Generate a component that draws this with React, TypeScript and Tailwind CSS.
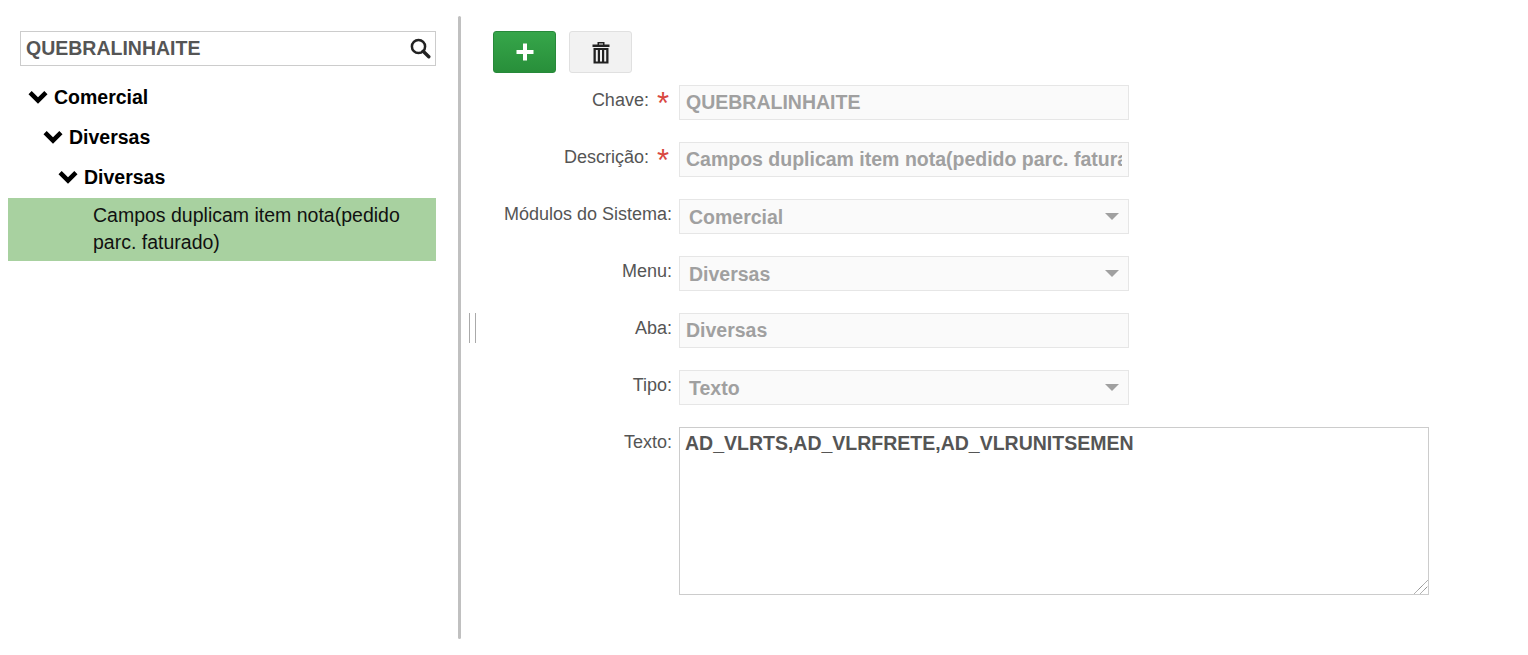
import React from 'react';

const font = { fontFamily: '"Liberation Sans", Arial, sans-serif' };

function Chevron() {
  return (
    <svg width="20" height="14" viewBox="0 0 20 14" className="shrink-0">
      <path d="M0.5 4.2 L3.7 1 L10 7.3 L16.3 1 L19.5 4.2 L10 13.7 Z" fill="#000" />
    </svg>
  );
}

function SearchIcon() {
  return (
    <svg width="21" height="21" viewBox="0 0 21 21">
      <circle cx="8.5" cy="8.5" r="6.6" fill="none" stroke="#222" strokeWidth="2.5" />
      <path d="M13.2 13.2 L18.8 18.8" stroke="#222" strokeWidth="3.4" strokeLinecap="round" />
    </svg>
  );
}

function PlusIcon() {
  return (
    <svg width="18" height="18" viewBox="0 0 18 18">
      <path d="M7 0.5 H11 V7 H17.5 V11 H11 V17.5 H7 V11 H0.5 V7 H7 Z" fill="#fff" />
    </svg>
  );
}

function TrashIcon() {
  return (
    <svg width="18" height="23" viewBox="0 0 18 23">
      <path d="M5.5 3.5 V1 H12.5 V3.5 H11 V2.4 H7 V3.5 Z M0.5 3.5 H17.5 V6 H0.5 Z" fill="#222" />
      <path d="M1.5 7 H16.5 V22.5 H1.5 Z M3.8 9 V20.5 H5.8 V9 Z M8 9 V20.5 H10 V9 Z M12.2 9 V20.5 H14.2 V9 Z" fill="#222" fillRule="evenodd" />
    </svg>
  );
}

function TreeRow({ label, indent }: { label: string; indent: string }) {
  return (
    <div className={`flex h-10 items-center gap-[6px] ${indent}`}>
      <Chevron />
      <span className="pt-[2px] text-[19.5px] font-bold leading-none text-black">{label}</span>
    </div>
  );
}

function Row({ label, required, children }: { label: string; required?: boolean; children: React.ReactNode }) {
  return (
    <div className="flex items-start">
      <div className="flex w-[196px] justify-end pt-[3px] text-[18px] leading-6 text-[#555]">
        <span>{label}</span>
        {required && <span className="ml-[8px] mr-[3px] text-[31px] leading-8 text-[#d9483f]">*</span>}
      </div>
      <div className="ml-[7px]">{children}</div>
    </div>
  );
}

function ReadOnlyInput({ value }: { value: string }) {
  return (
    <input
      readOnly
      value={value}
      className="block h-[35px] w-[450px] border border-[#e6e6e6] bg-[#fafafa] px-[6px] text-[19.5px] font-bold text-[#a0a0a0] outline-none"
      style={font}
    />
  );
}

function ReadOnlySelect({ value }: { value: string }) {
  return (
    <div className="flex h-[35px] w-[450px] items-center justify-between border border-[#e6e6e6] bg-[#fafafa] pl-[9px] pr-[9px] text-[19.5px] font-bold text-[#a0a0a0]">
      <span className="pt-[2px]">{value}</span>
      <span className="h-0 w-0 border-x-[7px] border-t-[7px] border-x-transparent border-t-[#a0a0a0]" />
    </div>
  );
}

export default function App() {
  return (
    <div className="flex h-[655px] w-[1528px] overflow-hidden bg-white" style={font}>
      {/* Tree */}
      <div className="w-[458px] pt-[31px] pl-2">
        <div className="ml-3 flex h-[35px] w-[416px] items-center justify-between border border-[#ccc] pl-[5px] pr-[4px]">
          <span className="text-[19.5px] font-bold text-[#555]">QUEBRALINHAITE</span>
          <SearchIcon />
        </div>
        <div className="mt-[11px]">
          <TreeRow label="Comercial" indent="pl-[20px]" />
          <TreeRow label="Diversas" indent="pl-[35px]" />
          <TreeRow label="Diversas" indent="pl-[50px]" />
        </div>
        <div className="mt-[1px] h-[63px] w-[428px] bg-[#a8d1a0] pt-[4px] pl-[85px] pr-6 text-[19.5px] leading-[27px] text-[#111]">
          Campos duplicam item nota(pedido parc. faturado)
        </div>
      </div>

      {/* Splitter */}
      <div className="mt-4 h-[623px] w-[3px] rounded-full bg-[#c0c0c0]" />
      <div className="flex w-[32px] items-center pl-2">
        <div className="h-[30px] w-[7px] border-x border-[#aaa]" />
      </div>

      {/* Form */}
      <div className="pt-[31px]">
        <div className="flex gap-[13px]">
          <button className="flex h-[42px] w-[63px] items-center justify-center rounded-[3px] border border-[#27893a] bg-gradient-to-b from-[#36a64a] to-[#288f3a]">
            <PlusIcon />
          </button>
          <button className="flex h-[42px] w-[63px] items-center justify-center rounded-[3px] border border-[#e0e0e0] bg-[#f2f2f2]">
            <TrashIcon />
          </button>
        </div>
        <div className="mt-3 -ml-[17px] flex flex-col gap-[22px]">
          <Row label="Chave:" required>
            <ReadOnlyInput value="QUEBRALINHAITE" />
          </Row>
          <Row label="Descrição:" required>
            <ReadOnlyInput value="Campos duplicam item nota(pedido parc. faturado)" />
          </Row>
          <Row label="Módulos do Sistema:">
            <ReadOnlySelect value="Comercial" />
          </Row>
          <Row label="Menu:">
            <ReadOnlySelect value="Diversas" />
          </Row>
          <Row label="Aba:">
            <ReadOnlyInput value="Diversas" />
          </Row>
          <Row label="Tipo:">
            <ReadOnlySelect value="Texto" />
          </Row>
          <Row label="Texto:">
            <div className="relative">
              <textarea
                readOnly
                value="AD_VLRTS,AD_VLRFRETE,AD_VLRUNITSEMEN"
                className="block h-[168px] w-[750px] resize-none border border-[#ccc] bg-white px-[5px] py-px text-[19.5px] font-bold text-[#555] outline-none"
                style={font}
              />
              <svg width="14" height="14" viewBox="0 0 14 14" className="absolute right-[1px] bottom-[1px]">
                <path d="M0.5 13.5 L13.5 0.5 M6.5 13.5 L13.5 6.5" stroke="#666" strokeWidth="1" strokeDasharray="1 0.6" fill="none" />
              </svg>
            </div>
          </Row>
        </div>
      </div>
    </div>
  );
}
